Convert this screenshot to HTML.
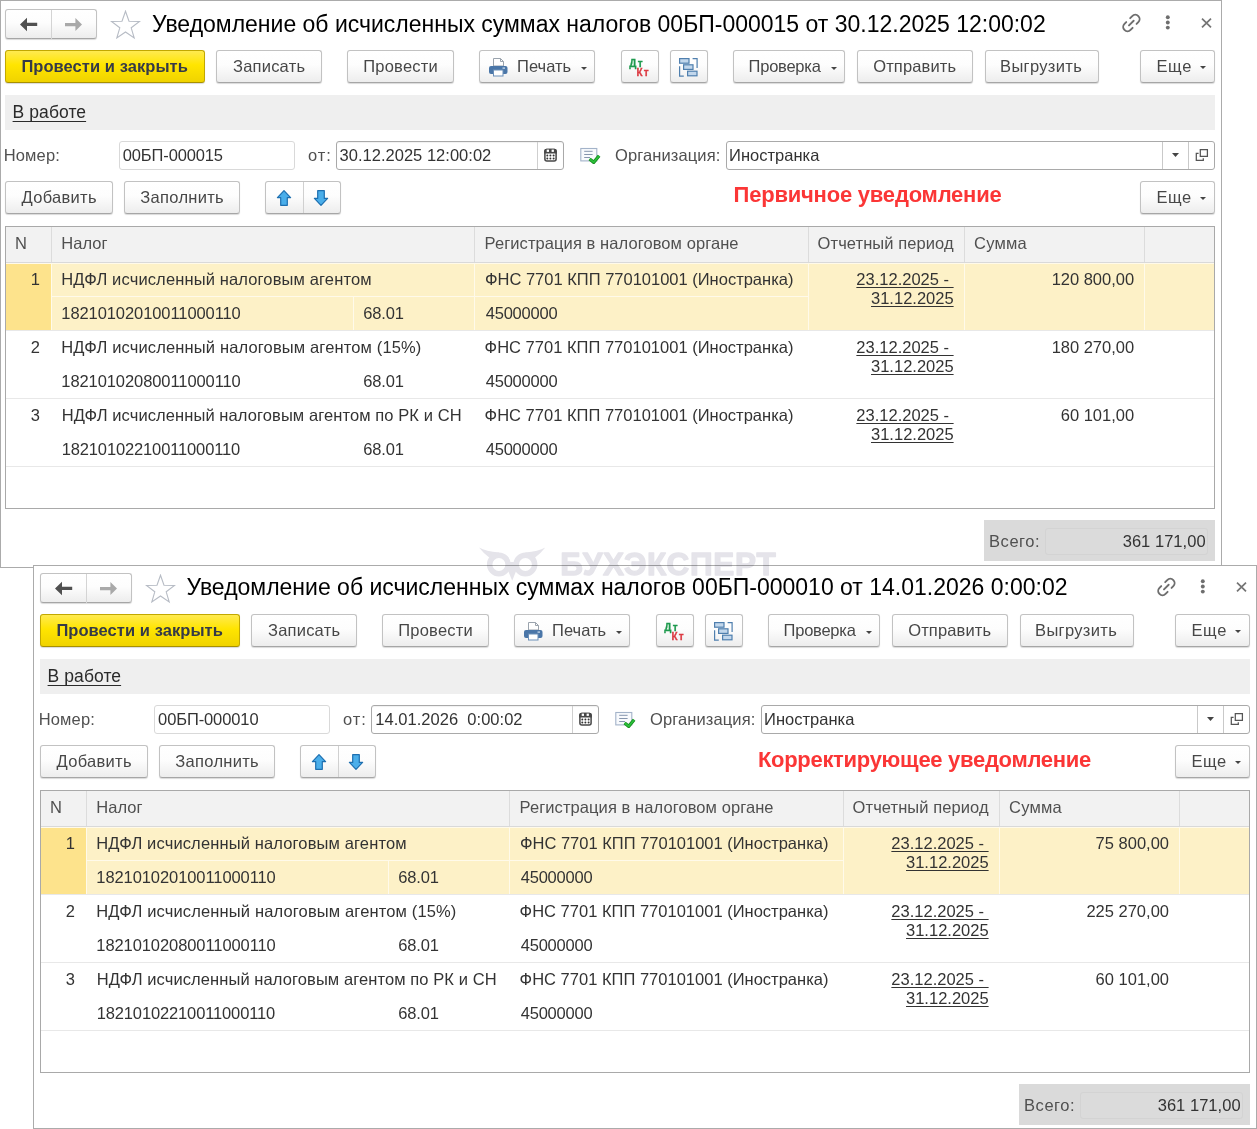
<!DOCTYPE html>
<html><head><meta charset="utf-8"><style>
*{margin:0;padding:0}
html,body{width:1257px;height:1129px;overflow:hidden;background:#fff}
body{position:relative;font-family:"Liberation Sans",sans-serif}
.t{position:absolute;line-height:1;white-space:nowrap}
.r{position:absolute}
.win{position:absolute;background:#fff;overflow:hidden}
.frame{position:absolute;box-sizing:border-box;border:1px solid #ababab}
.cont{position:absolute;left:0;top:0;width:1257px;height:600px}
.btn{position:absolute;box-sizing:border-box;border:1px solid #c2c2c2;border-bottom-color:#a6a6a6;border-radius:3px;background:linear-gradient(#fff 0%,#fdfdfd 45%,#ededed 100%);box-shadow:0 1px 1px rgba(0,0,0,.15)}
.ybtn{border-color:#c2a800;border-bottom-color:#a89000;background:linear-gradient(#ffea50 0%,#ffe500 45%,#f0d300 100%)}
.wm{position:absolute;mix-blend-mode:multiply}
</style></head><body>
<div class="win" style="left:0;top:0;width:1222px;height:568px">
<div class="frame" style="left:0;top:0;width:1222px;height:568px"></div>
<div class="cont">
<div class="btn" style="left:5px;top:9px;width:92px;height:30px"></div>
<div class="r" style="left:51px;top:10px;width:1px;height:29px;background:#d4d4d4"></div>
<svg class="r" style="left:19px;top:17px" width="20" height="16"><path d="M1 7.5L8 0.8V5.8H18.2V9H8V14.2Z" fill="#505050"/></svg>
<svg class="r" style="left:64px;top:17px" width="20" height="16"><path d="M18 7.5L11.4 1.1V5.9H1V9.3H11.4V14Z" fill="#a9a9a9"/></svg>
<svg class="r" style="left:110px;top:9.5px" width="31" height="30"><path d="M15.5 1.2L19 11.2L29.5 11.4L21.2 17.8L24.2 28L15.5 22L6.8 28L9.8 17.8L1.5 11.4L12 11.2Z" fill="none" stroke="#b7bcc5" stroke-width="1.1" stroke-linejoin="miter"/></svg>
<div class="t" id="a_title" style="left:152.10px;top:12.53px;font-size:23px;color:#000;font-weight:normal;letter-spacing:-0.004px;">Уведомление об исчисленных суммах налогов 00БП-000015 от 30.12.2025 12:00:02</div>
<svg class="r" style="left:1116px;top:8px" width="31" height="30"><g transform="translate(15.4 15) rotate(-45)" fill="none" stroke="#6e6e6e" stroke-width="1.9" stroke-linecap="round"><path d="M-3 -4.3H-5.5A4.3 4.3 0 0 0 -5.5 4.3H-2.6"/><path d="M3 4.3H5.5A4.3 4.3 0 0 0 5.5 -4.3H2.6"/><path d="M-3.4 0H3.2"/></g></svg>
<svg class="r" style="left:1163px;top:12px" width="10" height="20"><g fill="#6e6e6e"><circle cx="4.8" cy="5.2" r="1.95"/><circle cx="4.8" cy="10.5" r="1.95"/><circle cx="4.8" cy="15.6" r="1.95"/></g></svg>
<svg class="r" style="left:1200px;top:17px" width="13" height="12"><path d="M2 1.6L11 10.4M11 1.6L2 10.4" stroke="#747474" stroke-width="1.7"/></svg>
<div class="btn ybtn" style="left:5px;top:50px;width:200px;height:33px"></div>
<div class="t" id="a_ok" style="left:21.40px;top:58.03px;font-size:16.5px;color:#353a48;font-weight:bold;letter-spacing:0.063px;">Провести и закрыть</div>
<div class="btn" style="left:216px;top:50px;width:106px;height:33px"></div>
<div class="t" id="a_zap" style="left:233.00px;top:58.03px;font-size:16.5px;color:#474747;font-weight:normal;letter-spacing:0.214px;">Записать</div>
<div class="btn" style="left:347px;top:50px;width:107px;height:33px"></div>
<div class="t" id="a_prov" style="left:363.30px;top:58.03px;font-size:16.5px;color:#474747;font-weight:normal;letter-spacing:0.200px;">Провести</div>
<div class="btn" style="left:479px;top:50px;width:116px;height:33px"></div>
<div class="t" id="a_print" style="left:517.10px;top:58.03px;font-size:16.5px;color:#474747;font-weight:normal;">Печать</div>
<svg class="r" style="left:488px;top:57px" width="21" height="20"><path d="M5.5 1.5H12.5L15.5 4.5V9H5.5Z" fill="#fff" stroke="#9aa3ad" stroke-width="1"/><path d="M12.5 1.5V4.5H15.5" fill="none" stroke="#9aa3ad" stroke-width="1"/><rect x="1" y="9" width="18.5" height="8" rx="2" fill="#4a76a8"/><rect x="5.5" y="13" width="9.5" height="6" fill="#fff" stroke="#6b8fb8" stroke-width="1"/><rect x="14.5" y="10.5" width="2.5" height="1.2" fill="#cfe0f0"/></svg>
<svg class="r" style="left:580.5px;top:67px" width="6" height="3"><path d="M0 0H6L3.0 3Z" fill="#444"/></svg>
<div class="btn" style="left:621px;top:50px;width:38px;height:33px"></div>
<div class="t" style="left:629.3px;top:58.6px;font-size:10px;letter-spacing:1.3px;font-weight:bold;color:#1f9a4e;-webkit-text-stroke:0.3px #1f9a4e">Дт</div>
<div class="t" style="left:636.5px;top:68.3px;font-size:10px;letter-spacing:1.2px;font-weight:bold;color:#dc3a42;-webkit-text-stroke:0.3px #dc3a42">Кт</div>
<div class="btn" style="left:670px;top:50px;width:38px;height:33px"></div>
<svg class="r" style="left:678px;top:57px" width="21" height="21"><g stroke="#4f7fae" stroke-width="1.2"><rect x="1.6" y="1.6" width="9.4" height="4.6" fill="#c2d7ec"/><rect x="5.6" y="7.8" width="9.4" height="4.6" fill="#c2d7ec"/><rect x="9.6" y="14.2" width="9.4" height="4.6" fill="#c2d7ec"/><path d="M14.6 1.6H19.1V10.9" fill="none"/><path d="M1.6 9.3V19.1H5.8" fill="none"/></g></svg>
<div class="btn" style="left:733px;top:50px;width:112px;height:33px"></div>
<div class="t" id="a_chk" style="left:748.60px;top:58.03px;font-size:16.5px;color:#474747;font-weight:normal;letter-spacing:-0.242px;">Проверка</div>
<svg class="r" style="left:831.0px;top:67px" width="6" height="3"><path d="M0 0H6L3.0 3Z" fill="#444"/></svg>
<div class="btn" style="left:857px;top:50px;width:116px;height:33px"></div>
<div class="t" id="a_send" style="left:873.20px;top:58.03px;font-size:16.5px;color:#474747;font-weight:normal;letter-spacing:0.124px;">Отправить</div>
<div class="btn" style="left:985px;top:50px;width:114px;height:33px"></div>
<div class="t" id="a_exp" style="left:1000.10px;top:58.03px;font-size:16.5px;color:#474747;font-weight:normal;letter-spacing:0.323px;">Выгрузить</div>
<div class="btn" style="left:1140px;top:50px;width:75px;height:33px"></div>
<div class="t" id="a_more1" style="left:1156.40px;top:58.03px;font-size:16.5px;color:#474747;font-weight:normal;letter-spacing:0.700px;">Еще</div>
<svg class="r" style="left:1200.2px;top:66px" width="6" height="3"><path d="M0 0H6L3.0 3Z" fill="#444"/></svg>
<div class="r" style="left:5px;top:95px;width:1210px;height:35px;background:#efefef"></div>
<div class="t" id="a_state" style="left:12.60px;top:104.19px;font-size:17.5px;color:#2a2a2a;font-weight:normal;letter-spacing:0.071px;text-decoration:underline;text-underline-offset:2.5px">В работе</div>
<div class="t" id="a_numl" style="left:3.70px;top:147.03px;font-size:16.5px;color:#505050;font-weight:normal;letter-spacing:0.160px;">Номер:</div>
<div class="r" style="left:119px;top:141px;width:176px;height:29px;background:#fff;border:1px solid #d9d9d9;border-radius:3px;box-sizing:border-box"></div>
<div class="t" id="a_num" style="left:122.80px;top:147.03px;font-size:16.5px;color:#333;font-weight:normal;letter-spacing:-0.140px;">00БП-000015</div>
<div class="t" id="a_ot" style="left:307.90px;top:147.03px;font-size:16.5px;color:#505050;font-weight:normal;letter-spacing:1.050px;">от:</div>
<div class="r" style="left:336px;top:141px;width:228px;height:29px;background:#fff;border:1px solid #a9a9a9;border-radius:3px;box-sizing:border-box;box-shadow:inset 0 1px 1px rgba(0,0,0,.06)"></div>
<div class="r" style="left:537px;top:142px;width:1px;height:27px;background:#cfcfcf"></div>
<div class="t" id="a_date" style="left:339.50px;top:147.03px;font-size:16.5px;color:#333;font-weight:normal;letter-spacing:0.022px;white-space:pre">30.12.2025 12:00:02</div>
<svg class="r" style="left:544px;top:147.5px" width="13" height="14"><rect x="0.9" y="1.5" width="11.2" height="11.6" rx="2" fill="#fff" stroke="#474747" stroke-width="1.5"/><path d="M0.2 3.2Q0.2 0.8 2.6 0.8H10.4Q12.8 0.8 12.8 3.2V5.4H0.2Z" fill="#474747"/><rect x="2.7" y="1.6" width="2.3" height="2.3" fill="#fff"/><rect x="7.6" y="1.6" width="2.3" height="2.3" fill="#fff"/><g fill="#333"><circle cx="3.3" cy="7.6" r="1"/><circle cx="6.4" cy="7.6" r="1"/><circle cx="9.6" cy="7.6" r="1"/><circle cx="3.3" cy="10.5" r="1"/><circle cx="6.4" cy="10.5" r="1"/><circle cx="9.6" cy="10.5" r="1"/></g></svg>
<svg class="r" style="left:579px;top:147px" width="22" height="17"><rect x="1.8" y="1.5" width="16" height="12.4" fill="#f8fafd" stroke="#a3b3c9" stroke-width="1.1"/><path d="M5.2 4.3H13.6M5.2 7.5H13.6M5.2 10.5H11" stroke="#8595ad" stroke-width="1"/><path d="M10.6 12L14.8 15.3L20.1 8.8" fill="none" stroke="#168a1e" stroke-width="3.4" stroke-linejoin="round"/><path d="M10.6 12L14.8 15.3L20.1 8.8" fill="none" stroke="#2bc03a" stroke-width="1.8" stroke-linejoin="round"/></svg>
<div class="t" id="a_orgl" style="left:615.10px;top:147.03px;font-size:16.5px;color:#505050;font-weight:normal;letter-spacing:0.101px;">Организация:</div>
<div class="r" style="left:725.5px;top:141px;width:489.5px;height:29px;background:#fff;border:1px solid #a9a9a9;border-radius:3px;box-sizing:border-box"></div>
<div class="r" style="left:1162px;top:142px;width:1px;height:27px;background:#c9c9c9"></div>
<div class="r" style="left:1188px;top:142px;width:1px;height:27px;background:#c9c9c9"></div>
<div class="t" id="a_org" style="left:729.10px;top:147.03px;font-size:16.5px;color:#333;font-weight:normal;letter-spacing:0.011px;">Иностранка</div>
<svg class="r" style="left:1171.5px;top:153px" width="7" height="4"><path d="M0 0H7L3.5 4Z" fill="#444"/></svg>
<svg class="r" style="left:1194.5px;top:148px" width="14" height="14"><path d="M5.3 1.6H12.4V8.4H5.3Z" fill="none" stroke="#555" stroke-width="1.25"/><path d="M3.6 5.3H1.3V12.4H8.3V10.2" fill="none" stroke="#555" stroke-width="1.25"/></svg>
<div class="btn" style="left:5px;top:181px;width:108px;height:33px"></div>
<div class="t" id="a_add" style="left:21.50px;top:189.03px;font-size:16.5px;color:#474747;font-weight:normal;letter-spacing:0.300px;">Добавить</div>
<div class="btn" style="left:124px;top:181px;width:116px;height:33px"></div>
<div class="t" id="a_fill" style="left:140.30px;top:189.03px;font-size:16.5px;color:#474747;font-weight:normal;letter-spacing:0.302px;">Заполнить</div>
<div class="btn" style="left:265px;top:181px;width:76px;height:33px"></div>
<div class="r" style="left:303px;top:182px;width:1px;height:31px;background:#d0d0d0"></div>
<svg class="r" style="left:276px;top:189px" width="17" height="18"><path d="M8 1.6L14.6 8.6H11.3V16.3H4.7V8.6H1.4Z" fill="#4aaeea" stroke="#1d6fb0" stroke-width="1.2" stroke-linejoin="round"/></svg>
<svg class="r" style="left:313px;top:189px" width="17" height="18"><path d="M8 16.4L14.6 9.4H11.3V1.7H4.7V9.4H1.4Z" fill="#4aaeea" stroke="#1d6fb0" stroke-width="1.2" stroke-linejoin="round"/></svg>
<div class="t" id="a_red" style="left:733.60px;top:184.08px;font-size:22px;color:#fb3636;font-weight:bold;letter-spacing:-0.215px;">Первичное уведомление</div>
<div class="btn" style="left:1140px;top:181px;width:75px;height:33px"></div>
<div class="t" id="a_more2" style="left:1156.50px;top:189.03px;font-size:16.5px;color:#474747;font-weight:normal;letter-spacing:0.600px;">Еще</div>
<svg class="r" style="left:1200.2px;top:197px" width="6" height="3"><path d="M0 0H6L3.0 3Z" fill="#444"/></svg>
<div class="r" style="left:5px;top:226px;width:1210px;height:283px;background:#fff;border:1px solid #a9a9a9;box-sizing:border-box"></div>
<div class="r" style="left:6px;top:227px;width:1208px;height:35px;background:#f2f2f2"></div>
<div class="r" style="left:6px;top:262px;width:1208px;height:1px;background:#d9d9d9"></div>
<div class="r" style="left:51px;top:227px;width:1px;height:35px;background:#dcdcdc"></div>
<div class="r" style="left:474px;top:227px;width:1px;height:35px;background:#dcdcdc"></div>
<div class="r" style="left:808px;top:227px;width:1px;height:35px;background:#dcdcdc"></div>
<div class="r" style="left:964px;top:227px;width:1px;height:35px;background:#dcdcdc"></div>
<div class="r" style="left:1144px;top:227px;width:1px;height:35px;background:#dcdcdc"></div>
<div class="t" id="a_hN" style="left:14.90px;top:235.03px;font-size:16.5px;color:#505050;font-weight:normal;letter-spacing:2.500px;">N</div>
<div class="t" id="a_hTax" style="left:61.30px;top:235.03px;font-size:16.5px;color:#505050;font-weight:normal;letter-spacing:0.050px;">Налог</div>
<div class="t" id="a_hReg" style="left:484.60px;top:235.03px;font-size:16.5px;color:#505050;font-weight:normal;letter-spacing:0.079px;">Регистрация в налоговом органе</div>
<div class="t" id="a_hPer" style="left:817.60px;top:235.03px;font-size:16.5px;color:#505050;font-weight:normal;letter-spacing:0.079px;">Отчетный период</div>
<div class="t" id="a_hSum" style="left:974.10px;top:235.03px;font-size:16.5px;color:#505050;font-weight:normal;letter-spacing:0.174px;">Сумма</div>
<div class="r" style="left:6px;top:263px;width:1208px;height:67px;background:#fdf1c7"></div>
<div class="r" style="left:6px;top:263px;width:45px;height:67px;background:#fde38c"></div>
<div class="r" style="left:6px;top:263px;width:1208px;height:1px;background:#fffaea"></div>
<div class="r" style="left:51px;top:263px;width:1px;height:67px;background:#fffaea"></div>
<div class="r" style="left:52px;top:296px;width:756px;height:1px;background:#fffaea"></div>
<div class="r" style="left:474px;top:263px;width:1px;height:67px;background:#fffaea"></div>
<div class="r" style="left:808px;top:263px;width:1px;height:67px;background:#fffaea"></div>
<div class="r" style="left:964px;top:263px;width:1px;height:67px;background:#fffaea"></div>
<div class="r" style="left:1144px;top:263px;width:1px;height:67px;background:#fffaea"></div>
<div class="r" style="left:353px;top:297px;width:1px;height:33px;background:#fffaea"></div>
<div class="r" style="left:6px;top:330px;width:1208px;height:1px;background:#e8e8e8"></div>
<div class="t" id="a_n0" style="right:1217.00px;text-align:right;top:271.03px;font-size:16.5px;color:#333;font-weight:normal;">1</div>
<div class="t" id="a_tax0" style="left:61.30px;top:271.03px;font-size:16.5px;color:#333;font-weight:normal;letter-spacing:0.134px;">НДФЛ исчисленный налоговым агентом</div>
<div class="t" id="a_code0" style="left:61.30px;top:305.03px;font-size:16.5px;color:#333;font-weight:normal;letter-spacing:-0.083px;">18210102010011000110</div>
<div class="t" id="a_acc0" style="left:363.20px;top:305.03px;font-size:16.5px;color:#333;font-weight:normal;letter-spacing:-0.125px;">68.01</div>
<div class="t" id="a_reg0" style="left:485.00px;top:271.03px;font-size:16.5px;color:#333;font-weight:normal;letter-spacing:-0.003px;">ФНС 7701 КПП 770101001 (Иностранка)</div>
<div class="t" id="a_oktmo0" style="left:485.72px;top:305.03px;font-size:16.5px;color:#333;font-weight:normal;letter-spacing:-0.217px;">45000000</div>
<div class="t" id="a_p10" style="right:303.40px;text-align:right;top:271.03px;font-size:16.5px;color:#333;font-weight:normal;text-decoration:underline;text-underline-offset:2px;white-space:pre">23.12.2025 -&nbsp;</div>
<div class="t" id="a_p20" style="right:303.40px;text-align:right;top:290.03px;font-size:16.5px;color:#333;font-weight:normal;text-decoration:underline;text-underline-offset:2px">31.12.2025</div>
<div class="t" id="a_sum0" style="right:122.90px;text-align:right;top:271.03px;font-size:16.5px;color:#333;font-weight:normal;letter-spacing:-0.011px;">120 800,00</div>
<div class="r" style="left:6px;top:398px;width:1208px;height:1px;background:#e8e8e8"></div>
<div class="t" id="a_n1" style="right:1217.00px;text-align:right;top:339.03px;font-size:16.5px;color:#333;font-weight:normal;">2</div>
<div class="t" id="a_tax1" style="left:61.30px;top:339.03px;font-size:16.5px;color:#333;font-weight:normal;letter-spacing:0.144px;">НДФЛ исчисленный налоговым агентом (15%)</div>
<div class="t" id="a_code1" style="left:61.30px;top:373.03px;font-size:16.5px;color:#333;font-weight:normal;letter-spacing:-0.083px;">18210102080011000110</div>
<div class="t" id="a_acc1" style="left:363.20px;top:373.03px;font-size:16.5px;color:#333;font-weight:normal;letter-spacing:-0.125px;">68.01</div>
<div class="t" id="a_reg1" style="left:484.60px;top:339.03px;font-size:16.5px;color:#333;font-weight:normal;letter-spacing:0.010px;">ФНС 7701 КПП 770101001 (Иностранка)</div>
<div class="t" id="a_oktmo1" style="left:485.72px;top:373.03px;font-size:16.5px;color:#333;font-weight:normal;letter-spacing:-0.217px;">45000000</div>
<div class="t" id="a_p11" style="right:303.40px;text-align:right;top:339.03px;font-size:16.5px;color:#333;font-weight:normal;text-decoration:underline;text-underline-offset:2px;white-space:pre">23.12.2025 -&nbsp;</div>
<div class="t" id="a_p21" style="right:303.40px;text-align:right;top:358.03px;font-size:16.5px;color:#333;font-weight:normal;text-decoration:underline;text-underline-offset:2px">31.12.2025</div>
<div class="t" id="a_sum1" style="right:122.90px;text-align:right;top:339.03px;font-size:16.5px;color:#333;font-weight:normal;letter-spacing:-0.011px;">180 270,00</div>
<div class="r" style="left:6px;top:466px;width:1208px;height:1px;background:#e8e8e8"></div>
<div class="t" id="a_n2" style="right:1217.00px;text-align:right;top:407.03px;font-size:16.5px;color:#333;font-weight:normal;">3</div>
<div class="t" id="a_tax2" style="left:61.68px;top:407.03px;font-size:16.5px;color:#333;font-weight:normal;letter-spacing:0.090px;">НДФЛ исчисленный налоговым агентом по РК и СН</div>
<div class="t" id="a_code2" style="left:61.68px;top:441.03px;font-size:16.5px;color:#333;font-weight:normal;letter-spacing:-0.134px;">18210102210011000110</div>
<div class="t" id="a_acc2" style="left:363.20px;top:441.03px;font-size:16.5px;color:#333;font-weight:normal;letter-spacing:-0.125px;">68.01</div>
<div class="t" id="a_reg2" style="left:484.60px;top:407.03px;font-size:16.5px;color:#333;font-weight:normal;letter-spacing:0.010px;">ФНС 7701 КПП 770101001 (Иностранка)</div>
<div class="t" id="a_oktmo2" style="left:485.72px;top:441.03px;font-size:16.5px;color:#333;font-weight:normal;letter-spacing:-0.217px;">45000000</div>
<div class="t" id="a_p12" style="right:303.40px;text-align:right;top:407.03px;font-size:16.5px;color:#333;font-weight:normal;text-decoration:underline;text-underline-offset:2px;white-space:pre">23.12.2025 -&nbsp;</div>
<div class="t" id="a_p22" style="right:303.40px;text-align:right;top:426.03px;font-size:16.5px;color:#333;font-weight:normal;text-decoration:underline;text-underline-offset:2px">31.12.2025</div>
<div class="t" id="a_sum2" style="right:122.90px;text-align:right;top:407.03px;font-size:16.5px;color:#333;font-weight:normal;letter-spacing:-0.011px;">60 101,00</div>
<div class="r" style="left:984px;top:520px;width:231px;height:41px;background:#dadada"></div>
<div class="r" style="left:1045px;top:528px;width:163px;height:27px;background:#dbdbdb;border:1px solid #d3d3d3;border-radius:3px;box-sizing:border-box"></div>
<div class="t" id="a_totl" style="left:989.10px;top:532.53px;font-size:16.5px;color:#505050;font-weight:normal;letter-spacing:0.520px;">Всего:</div>
<div class="t" id="a_tot" style="right:51.40px;text-align:right;top:532.53px;font-size:16.5px;color:#333;font-weight:normal;letter-spacing:0.033px;">361 171,00</div>
</div></div>
<div class="win" style="left:33px;top:565px;width:1224px;height:564px">
<div class="frame" style="left:0;top:0;width:1224px;height:564px"></div>
<div class="cont" style="left:2px;top:-1px">
<div class="btn" style="left:5px;top:9px;width:92px;height:30px"></div>
<div class="r" style="left:51px;top:10px;width:1px;height:29px;background:#d4d4d4"></div>
<svg class="r" style="left:19px;top:17px" width="20" height="16"><path d="M1 7.5L8 0.8V5.8H18.2V9H8V14.2Z" fill="#505050"/></svg>
<svg class="r" style="left:64px;top:17px" width="20" height="16"><path d="M18 7.5L11.4 1.1V5.9H1V9.3H11.4V14Z" fill="#a9a9a9"/></svg>
<svg class="r" style="left:110px;top:9.5px" width="31" height="30"><path d="M15.5 1.2L19 11.2L29.5 11.4L21.2 17.8L24.2 28L15.5 22L6.8 28L9.8 17.8L1.5 11.4L12 11.2Z" fill="none" stroke="#b7bcc5" stroke-width="1.1" stroke-linejoin="miter"/></svg>
<div class="t" id="b_title" style="left:151.60px;top:11.93px;font-size:23px;color:#000;font-weight:normal;letter-spacing:-0.003px;">Уведомление об исчисленных суммах налогов 00БП-000010 от 14.01.2026 0:00:02</div>
<svg class="r" style="left:1116px;top:8px" width="31" height="30"><g transform="translate(15.4 15) rotate(-45)" fill="none" stroke="#6e6e6e" stroke-width="1.9" stroke-linecap="round"><path d="M-3 -4.3H-5.5A4.3 4.3 0 0 0 -5.5 4.3H-2.6"/><path d="M3 4.3H5.5A4.3 4.3 0 0 0 5.5 -4.3H2.6"/><path d="M-3.4 0H3.2"/></g></svg>
<svg class="r" style="left:1163px;top:12px" width="10" height="20"><g fill="#6e6e6e"><circle cx="4.8" cy="5.2" r="1.95"/><circle cx="4.8" cy="10.5" r="1.95"/><circle cx="4.8" cy="15.6" r="1.95"/></g></svg>
<svg class="r" style="left:1200px;top:17px" width="13" height="12"><path d="M2 1.6L11 10.4M11 1.6L2 10.4" stroke="#747474" stroke-width="1.7"/></svg>
<div class="btn ybtn" style="left:5px;top:50px;width:200px;height:33px"></div>
<div class="t" id="b_ok" style="left:21.40px;top:58.03px;font-size:16.5px;color:#353a48;font-weight:bold;letter-spacing:0.063px;">Провести и закрыть</div>
<div class="btn" style="left:216px;top:50px;width:106px;height:33px"></div>
<div class="t" id="b_zap" style="left:233.00px;top:58.03px;font-size:16.5px;color:#474747;font-weight:normal;letter-spacing:0.214px;">Записать</div>
<div class="btn" style="left:347px;top:50px;width:107px;height:33px"></div>
<div class="t" id="b_prov" style="left:363.30px;top:58.03px;font-size:16.5px;color:#474747;font-weight:normal;letter-spacing:0.200px;">Провести</div>
<div class="btn" style="left:479px;top:50px;width:116px;height:33px"></div>
<div class="t" id="b_print" style="left:517.10px;top:58.03px;font-size:16.5px;color:#474747;font-weight:normal;">Печать</div>
<svg class="r" style="left:488px;top:57px" width="21" height="20"><path d="M5.5 1.5H12.5L15.5 4.5V9H5.5Z" fill="#fff" stroke="#9aa3ad" stroke-width="1"/><path d="M12.5 1.5V4.5H15.5" fill="none" stroke="#9aa3ad" stroke-width="1"/><rect x="1" y="9" width="18.5" height="8" rx="2" fill="#4a76a8"/><rect x="5.5" y="13" width="9.5" height="6" fill="#fff" stroke="#6b8fb8" stroke-width="1"/><rect x="14.5" y="10.5" width="2.5" height="1.2" fill="#cfe0f0"/></svg>
<svg class="r" style="left:580.5px;top:67px" width="6" height="3"><path d="M0 0H6L3.0 3Z" fill="#444"/></svg>
<div class="btn" style="left:621px;top:50px;width:38px;height:33px"></div>
<div class="t" style="left:629.3px;top:58.6px;font-size:10px;letter-spacing:1.3px;font-weight:bold;color:#1f9a4e;-webkit-text-stroke:0.3px #1f9a4e">Дт</div>
<div class="t" style="left:636.5px;top:68.3px;font-size:10px;letter-spacing:1.2px;font-weight:bold;color:#dc3a42;-webkit-text-stroke:0.3px #dc3a42">Кт</div>
<div class="btn" style="left:670px;top:50px;width:38px;height:33px"></div>
<svg class="r" style="left:678px;top:57px" width="21" height="21"><g stroke="#4f7fae" stroke-width="1.2"><rect x="1.6" y="1.6" width="9.4" height="4.6" fill="#c2d7ec"/><rect x="5.6" y="7.8" width="9.4" height="4.6" fill="#c2d7ec"/><rect x="9.6" y="14.2" width="9.4" height="4.6" fill="#c2d7ec"/><path d="M14.6 1.6H19.1V10.9" fill="none"/><path d="M1.6 9.3V19.1H5.8" fill="none"/></g></svg>
<div class="btn" style="left:733px;top:50px;width:112px;height:33px"></div>
<div class="t" id="b_chk" style="left:748.60px;top:58.03px;font-size:16.5px;color:#474747;font-weight:normal;letter-spacing:-0.242px;">Проверка</div>
<svg class="r" style="left:831.0px;top:67px" width="6" height="3"><path d="M0 0H6L3.0 3Z" fill="#444"/></svg>
<div class="btn" style="left:857px;top:50px;width:116px;height:33px"></div>
<div class="t" id="b_send" style="left:873.20px;top:58.03px;font-size:16.5px;color:#474747;font-weight:normal;letter-spacing:0.124px;">Отправить</div>
<div class="btn" style="left:985px;top:50px;width:114px;height:33px"></div>
<div class="t" id="b_exp" style="left:1000.10px;top:58.03px;font-size:16.5px;color:#474747;font-weight:normal;letter-spacing:0.323px;">Выгрузить</div>
<div class="btn" style="left:1140px;top:50px;width:75px;height:33px"></div>
<div class="t" id="b_more1" style="left:1156.40px;top:58.03px;font-size:16.5px;color:#474747;font-weight:normal;letter-spacing:0.700px;">Еще</div>
<svg class="r" style="left:1200.2px;top:66px" width="6" height="3"><path d="M0 0H6L3.0 3Z" fill="#444"/></svg>
<div class="r" style="left:5px;top:95px;width:1210px;height:35px;background:#efefef"></div>
<div class="t" id="b_state" style="left:12.60px;top:104.19px;font-size:17.5px;color:#2a2a2a;font-weight:normal;letter-spacing:0.071px;text-decoration:underline;text-underline-offset:2.5px">В работе</div>
<div class="t" id="b_numl" style="left:3.70px;top:147.03px;font-size:16.5px;color:#505050;font-weight:normal;letter-spacing:0.160px;">Номер:</div>
<div class="r" style="left:119px;top:141px;width:176px;height:29px;background:#fff;border:1px solid #d9d9d9;border-radius:3px;box-sizing:border-box"></div>
<div class="t" id="b_num" style="left:123.08px;top:147.03px;font-size:16.5px;color:#333;font-weight:normal;letter-spacing:-0.112px;">00БП-000010</div>
<div class="t" id="b_ot" style="left:307.90px;top:147.03px;font-size:16.5px;color:#505050;font-weight:normal;letter-spacing:1.050px;">от:</div>
<div class="r" style="left:336px;top:141px;width:228px;height:29px;background:#fff;border:1px solid #a9a9a9;border-radius:3px;box-sizing:border-box;box-shadow:inset 0 1px 1px rgba(0,0,0,.06)"></div>
<div class="r" style="left:537px;top:142px;width:1px;height:27px;background:#cfcfcf"></div>
<div class="t" id="b_date" style="left:340.30px;top:147.03px;font-size:16.5px;color:#333;font-weight:normal;letter-spacing:0.023px;white-space:pre">14.01.2026  0:00:02</div>
<svg class="r" style="left:544px;top:147.5px" width="13" height="14"><rect x="0.9" y="1.5" width="11.2" height="11.6" rx="2" fill="#fff" stroke="#474747" stroke-width="1.5"/><path d="M0.2 3.2Q0.2 0.8 2.6 0.8H10.4Q12.8 0.8 12.8 3.2V5.4H0.2Z" fill="#474747"/><rect x="2.7" y="1.6" width="2.3" height="2.3" fill="#fff"/><rect x="7.6" y="1.6" width="2.3" height="2.3" fill="#fff"/><g fill="#333"><circle cx="3.3" cy="7.6" r="1"/><circle cx="6.4" cy="7.6" r="1"/><circle cx="9.6" cy="7.6" r="1"/><circle cx="3.3" cy="10.5" r="1"/><circle cx="6.4" cy="10.5" r="1"/><circle cx="9.6" cy="10.5" r="1"/></g></svg>
<svg class="r" style="left:579px;top:147px" width="22" height="17"><rect x="1.8" y="1.5" width="16" height="12.4" fill="#f8fafd" stroke="#a3b3c9" stroke-width="1.1"/><path d="M5.2 4.3H13.6M5.2 7.5H13.6M5.2 10.5H11" stroke="#8595ad" stroke-width="1"/><path d="M10.6 12L14.8 15.3L20.1 8.8" fill="none" stroke="#168a1e" stroke-width="3.4" stroke-linejoin="round"/><path d="M10.6 12L14.8 15.3L20.1 8.8" fill="none" stroke="#2bc03a" stroke-width="1.8" stroke-linejoin="round"/></svg>
<div class="t" id="b_orgl" style="left:615.10px;top:147.03px;font-size:16.5px;color:#505050;font-weight:normal;letter-spacing:0.101px;">Организация:</div>
<div class="r" style="left:725.5px;top:141px;width:489.5px;height:29px;background:#fff;border:1px solid #a9a9a9;border-radius:3px;box-sizing:border-box"></div>
<div class="r" style="left:1162px;top:142px;width:1px;height:27px;background:#c9c9c9"></div>
<div class="r" style="left:1188px;top:142px;width:1px;height:27px;background:#c9c9c9"></div>
<div class="t" id="b_org" style="left:729.10px;top:147.03px;font-size:16.5px;color:#333;font-weight:normal;letter-spacing:0.011px;">Иностранка</div>
<svg class="r" style="left:1171.5px;top:153px" width="7" height="4"><path d="M0 0H7L3.5 4Z" fill="#444"/></svg>
<svg class="r" style="left:1194.5px;top:148px" width="14" height="14"><path d="M5.3 1.6H12.4V8.4H5.3Z" fill="none" stroke="#555" stroke-width="1.25"/><path d="M3.6 5.3H1.3V12.4H8.3V10.2" fill="none" stroke="#555" stroke-width="1.25"/></svg>
<div class="btn" style="left:5px;top:181px;width:108px;height:33px"></div>
<div class="t" id="b_add" style="left:21.50px;top:189.03px;font-size:16.5px;color:#474747;font-weight:normal;letter-spacing:0.300px;">Добавить</div>
<div class="btn" style="left:124px;top:181px;width:116px;height:33px"></div>
<div class="t" id="b_fill" style="left:140.30px;top:189.03px;font-size:16.5px;color:#474747;font-weight:normal;letter-spacing:0.302px;">Заполнить</div>
<div class="btn" style="left:265px;top:181px;width:76px;height:33px"></div>
<div class="r" style="left:303px;top:182px;width:1px;height:31px;background:#d0d0d0"></div>
<svg class="r" style="left:276px;top:189px" width="17" height="18"><path d="M8 1.6L14.6 8.6H11.3V16.3H4.7V8.6H1.4Z" fill="#4aaeea" stroke="#1d6fb0" stroke-width="1.2" stroke-linejoin="round"/></svg>
<svg class="r" style="left:313px;top:189px" width="17" height="18"><path d="M8 16.4L14.6 9.4H11.3V1.7H4.7V9.4H1.4Z" fill="#4aaeea" stroke="#1d6fb0" stroke-width="1.2" stroke-linejoin="round"/></svg>
<div class="t" id="b_red" style="left:722.90px;top:185.28px;font-size:22px;color:#fb3636;font-weight:bold;letter-spacing:-0.294px;">Корректирующее уведомление</div>
<div class="btn" style="left:1140px;top:181px;width:75px;height:33px"></div>
<div class="t" id="b_more2" style="left:1156.50px;top:189.03px;font-size:16.5px;color:#474747;font-weight:normal;letter-spacing:0.600px;">Еще</div>
<svg class="r" style="left:1200.2px;top:197px" width="6" height="3"><path d="M0 0H6L3.0 3Z" fill="#444"/></svg>
<div class="r" style="left:5px;top:226px;width:1210px;height:283px;background:#fff;border:1px solid #a9a9a9;box-sizing:border-box"></div>
<div class="r" style="left:6px;top:227px;width:1208px;height:35px;background:#f2f2f2"></div>
<div class="r" style="left:6px;top:262px;width:1208px;height:1px;background:#d9d9d9"></div>
<div class="r" style="left:51px;top:227px;width:1px;height:35px;background:#dcdcdc"></div>
<div class="r" style="left:474px;top:227px;width:1px;height:35px;background:#dcdcdc"></div>
<div class="r" style="left:808px;top:227px;width:1px;height:35px;background:#dcdcdc"></div>
<div class="r" style="left:964px;top:227px;width:1px;height:35px;background:#dcdcdc"></div>
<div class="r" style="left:1144px;top:227px;width:1px;height:35px;background:#dcdcdc"></div>
<div class="t" id="b_hN" style="left:14.90px;top:235.03px;font-size:16.5px;color:#505050;font-weight:normal;letter-spacing:2.500px;">N</div>
<div class="t" id="b_hTax" style="left:61.30px;top:235.03px;font-size:16.5px;color:#505050;font-weight:normal;letter-spacing:0.050px;">Налог</div>
<div class="t" id="b_hReg" style="left:484.60px;top:235.03px;font-size:16.5px;color:#505050;font-weight:normal;letter-spacing:0.079px;">Регистрация в налоговом органе</div>
<div class="t" id="b_hPer" style="left:817.60px;top:235.03px;font-size:16.5px;color:#505050;font-weight:normal;letter-spacing:0.079px;">Отчетный период</div>
<div class="t" id="b_hSum" style="left:974.10px;top:235.03px;font-size:16.5px;color:#505050;font-weight:normal;letter-spacing:0.174px;">Сумма</div>
<div class="r" style="left:6px;top:263px;width:1208px;height:67px;background:#fdf1c7"></div>
<div class="r" style="left:6px;top:263px;width:45px;height:67px;background:#fde38c"></div>
<div class="r" style="left:6px;top:263px;width:1208px;height:1px;background:#fffaea"></div>
<div class="r" style="left:51px;top:263px;width:1px;height:67px;background:#fffaea"></div>
<div class="r" style="left:52px;top:296px;width:756px;height:1px;background:#fffaea"></div>
<div class="r" style="left:474px;top:263px;width:1px;height:67px;background:#fffaea"></div>
<div class="r" style="left:808px;top:263px;width:1px;height:67px;background:#fffaea"></div>
<div class="r" style="left:964px;top:263px;width:1px;height:67px;background:#fffaea"></div>
<div class="r" style="left:1144px;top:263px;width:1px;height:67px;background:#fffaea"></div>
<div class="r" style="left:353px;top:297px;width:1px;height:33px;background:#fffaea"></div>
<div class="r" style="left:6px;top:330px;width:1208px;height:1px;background:#e8e8e8"></div>
<div class="t" id="b_n0" style="right:1217.00px;text-align:right;top:271.03px;font-size:16.5px;color:#333;font-weight:normal;">1</div>
<div class="t" id="b_tax0" style="left:61.30px;top:271.03px;font-size:16.5px;color:#333;font-weight:normal;letter-spacing:0.134px;">НДФЛ исчисленный налоговым агентом</div>
<div class="t" id="b_code0" style="left:61.30px;top:305.03px;font-size:16.5px;color:#333;font-weight:normal;letter-spacing:-0.083px;">18210102010011000110</div>
<div class="t" id="b_acc0" style="left:363.20px;top:305.03px;font-size:16.5px;color:#333;font-weight:normal;letter-spacing:-0.125px;">68.01</div>
<div class="t" id="b_reg0" style="left:485.00px;top:271.03px;font-size:16.5px;color:#333;font-weight:normal;letter-spacing:-0.003px;">ФНС 7701 КПП 770101001 (Иностранка)</div>
<div class="t" id="b_oktmo0" style="left:485.72px;top:305.03px;font-size:16.5px;color:#333;font-weight:normal;letter-spacing:-0.217px;">45000000</div>
<div class="t" id="b_p10" style="right:303.40px;text-align:right;top:271.03px;font-size:16.5px;color:#333;font-weight:normal;text-decoration:underline;text-underline-offset:2px;white-space:pre">23.12.2025 -&nbsp;</div>
<div class="t" id="b_p20" style="right:303.40px;text-align:right;top:290.03px;font-size:16.5px;color:#333;font-weight:normal;text-decoration:underline;text-underline-offset:2px">31.12.2025</div>
<div class="t" id="b_sum0" style="right:123.00px;text-align:right;top:271.03px;font-size:16.5px;color:#333;font-weight:normal;">75 800,00</div>
<div class="r" style="left:6px;top:398px;width:1208px;height:1px;background:#e8e8e8"></div>
<div class="t" id="b_n1" style="right:1217.00px;text-align:right;top:339.03px;font-size:16.5px;color:#333;font-weight:normal;">2</div>
<div class="t" id="b_tax1" style="left:61.30px;top:339.03px;font-size:16.5px;color:#333;font-weight:normal;letter-spacing:0.144px;">НДФЛ исчисленный налоговым агентом (15%)</div>
<div class="t" id="b_code1" style="left:61.30px;top:373.03px;font-size:16.5px;color:#333;font-weight:normal;letter-spacing:-0.083px;">18210102080011000110</div>
<div class="t" id="b_acc1" style="left:363.20px;top:373.03px;font-size:16.5px;color:#333;font-weight:normal;letter-spacing:-0.125px;">68.01</div>
<div class="t" id="b_reg1" style="left:484.60px;top:339.03px;font-size:16.5px;color:#333;font-weight:normal;letter-spacing:0.010px;">ФНС 7701 КПП 770101001 (Иностранка)</div>
<div class="t" id="b_oktmo1" style="left:485.72px;top:373.03px;font-size:16.5px;color:#333;font-weight:normal;letter-spacing:-0.217px;">45000000</div>
<div class="t" id="b_p11" style="right:303.40px;text-align:right;top:339.03px;font-size:16.5px;color:#333;font-weight:normal;text-decoration:underline;text-underline-offset:2px;white-space:pre">23.12.2025 -&nbsp;</div>
<div class="t" id="b_p21" style="right:303.40px;text-align:right;top:358.03px;font-size:16.5px;color:#333;font-weight:normal;text-decoration:underline;text-underline-offset:2px">31.12.2025</div>
<div class="t" id="b_sum1" style="right:123.00px;text-align:right;top:339.03px;font-size:16.5px;color:#333;font-weight:normal;">225 270,00</div>
<div class="r" style="left:6px;top:466px;width:1208px;height:1px;background:#e8e8e8"></div>
<div class="t" id="b_n2" style="right:1217.00px;text-align:right;top:407.03px;font-size:16.5px;color:#333;font-weight:normal;">3</div>
<div class="t" id="b_tax2" style="left:61.68px;top:407.03px;font-size:16.5px;color:#333;font-weight:normal;letter-spacing:0.090px;">НДФЛ исчисленный налоговым агентом по РК и СН</div>
<div class="t" id="b_code2" style="left:61.68px;top:441.03px;font-size:16.5px;color:#333;font-weight:normal;letter-spacing:-0.134px;">18210102210011000110</div>
<div class="t" id="b_acc2" style="left:363.20px;top:441.03px;font-size:16.5px;color:#333;font-weight:normal;letter-spacing:-0.125px;">68.01</div>
<div class="t" id="b_reg2" style="left:484.60px;top:407.03px;font-size:16.5px;color:#333;font-weight:normal;letter-spacing:0.010px;">ФНС 7701 КПП 770101001 (Иностранка)</div>
<div class="t" id="b_oktmo2" style="left:485.72px;top:441.03px;font-size:16.5px;color:#333;font-weight:normal;letter-spacing:-0.217px;">45000000</div>
<div class="t" id="b_p12" style="right:303.40px;text-align:right;top:407.03px;font-size:16.5px;color:#333;font-weight:normal;text-decoration:underline;text-underline-offset:2px;white-space:pre">23.12.2025 -&nbsp;</div>
<div class="t" id="b_p22" style="right:303.40px;text-align:right;top:426.03px;font-size:16.5px;color:#333;font-weight:normal;text-decoration:underline;text-underline-offset:2px">31.12.2025</div>
<div class="t" id="b_sum2" style="right:123.00px;text-align:right;top:407.03px;font-size:16.5px;color:#333;font-weight:normal;">60 101,00</div>
<div class="r" style="left:984px;top:520px;width:231px;height:41px;background:#dadada"></div>
<div class="r" style="left:1045px;top:528px;width:163px;height:27px;background:#dbdbdb;border:1px solid #d3d3d3;border-radius:3px;box-sizing:border-box"></div>
<div class="t" id="b_totl" style="left:989.10px;top:532.53px;font-size:16.5px;color:#505050;font-weight:normal;letter-spacing:0.520px;">Всего:</div>
<div class="t" id="b_tot" style="right:51.40px;text-align:right;top:532.53px;font-size:16.5px;color:#333;font-weight:normal;letter-spacing:0.033px;">361 171,00</div>
</div></div>
<svg class="wm" style="left:470px;top:540px" width="320" height="45" viewBox="0 0 320 45">
<g fill="#e5e4ea">
<path d="M9 7.6Q16 11.5 29 12.5L29 17.2L19.5 17.8Q14 14 9 7.6Z"/>
<path d="M75.3 7.6Q68.3 11.5 55.3 12.5L55.3 17.2L64.8 17.8Q70.3 14 75.3 7.6Z"/>
<path fill-rule="evenodd" d="M28.9 12.5A12 12 0 1 1 28.9 36.5A12 12 0 1 1 28.9 12.5ZM28.9 18A6.5 6.5 0 1 0 28.9 31A6.5 6.5 0 1 0 28.9 18Z"/>
<path fill-rule="evenodd" d="M55.4 12.5A12 12 0 1 1 55.4 36.5A12 12 0 1 1 55.4 12.5ZM55.4 18A6.5 6.5 0 1 0 55.4 31A6.5 6.5 0 1 0 55.4 18Z"/>
<path d="M39 22H45.5V31H39Z"/>
<path d="M37 28L47.3 28L42.2 40.8Z"/>
</g>
<text x="90.2" y="35.4" font-family="Liberation Sans" font-weight="bold" font-size="31.5" letter-spacing="0.7" fill="#e5e4ea" stroke="#e5e4ea" stroke-width="1.3" stroke-linejoin="round">БУХЭКСПЕРТ</text>
</svg>
</body></html>
